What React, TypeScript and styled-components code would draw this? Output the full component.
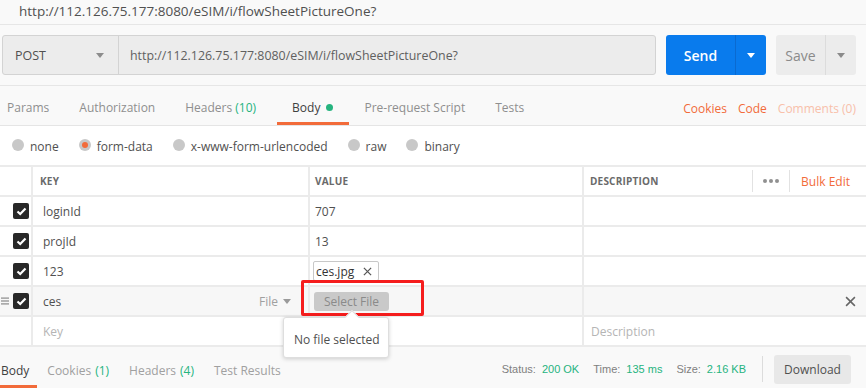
import styled, { createGlobalStyle } from 'styled-components'

const GlobalStyle = createGlobalStyle`
  html, body {
    margin: 0;
    padding: 0;
  }
  body {
    font-family: 'Open Sans', 'Liberation Sans', sans-serif;
    background: #f9f9f9;
    color: #505050;
  }
`

const ORANGE = '#f26b3a'
const GREEN = '#26b47f'

const Page = styled.div`
  width: 866px;
  height: 388px;
  overflow: hidden;
  display: flex;
  flex-direction: column;
  background: #f9f9f9;
`

const TitleBar = styled.div`
  height: 24px;
  line-height: 22px;
  padding-left: 19px;
  font-size: 13.5px;
  color: #505050;
  border-bottom: 1px solid #e6e6e6;
`

const RequestBar = styled.div`
  display: flex;
  gap: 10px;
  padding: 10px 10px 10px 2px;
  border-bottom: 1px solid #e6e6e6;
`

const UrlGroup = styled.div`
  flex: 1;
  height: 40px;
  box-sizing: border-box;
  display: flex;
  border: 1px solid #d3d3d3;
  border-radius: 3px;
  background: #ececec;
  font-size: 12.4px;
`

const MethodSelect = styled.div`
  width: 116px;
  box-sizing: border-box;
  display: flex;
  align-items: center;
  justify-content: space-between;
  padding: 0 14px 0 12px;
  border-right: 1px solid #d3d3d3;
  color: #505050;
  font-size: 12.5px;
`

const UrlText = styled.div`
  display: flex;
  align-items: center;
  padding-left: 11px;
  color: #606060;
`

const SplitButton = styled.div<{ $primary?: boolean; $main: number }>`
  display: flex;
  height: 40px;
  border-radius: 3px;
  overflow: hidden;
  background: ${(p) => (p.$primary ? '#097bed' : '#ececec')};
  color: ${(p) => (p.$primary ? '#ffffff' : '#8a8a8a')};
  font-size: 14px;
  font-weight: ${(p) => (p.$primary ? 600 : 400)};

  .main {
    width: ${(p) => p.$main}px;
    box-sizing: border-box;
    display: flex;
    align-items: center;
    justify-content: center;
    border-right: 1px solid ${(p) => (p.$primary ? '#0a6ad0' : '#dcdcdc')};
  }

  .caret {
    width: 30px;
    display: flex;
    align-items: center;
    justify-content: center;
  }
`

const TabBar = styled.div`
  height: 40px;
  box-sizing: border-box;
  display: flex;
  align-items: stretch;
  border-bottom: 1px solid #e5e5e5;
  padding-right: 10px;
`

const Tab = styled.div<{ $active?: boolean; $right?: number }>`
  display: flex;
  align-items: center;
  gap: 6px;
  padding: 7px ${(p) => p.$right ?? 15}px 0 15px;
  font-size: 12px;
  color: ${(p) => (p.$active ? '#404040' : '#8f8f8f')};
  border-bottom: 3px solid ${(p) => (p.$active ? ORANGE : 'transparent')};

  &:first-child {
    padding-left: 7px;
  }
`

const Count = styled.span`
  color: ${GREEN};
`

const Dot = styled.span`
  width: 7px;
  height: 7px;
  border-radius: 50%;
  background: ${GREEN};
`

const TabLinks = styled.div`
  margin-left: auto;
  display: flex;
  align-items: center;
  gap: 11px;
  padding-top: 5px;
  font-size: 12px;
`

const TabLink = styled.span<{ $faint?: boolean }>`
  color: ${(p) => (p.$faint ? '#f8c0aa' : ORANGE)};
`

const RadioRow = styled.div`
  height: 39px;
  display: flex;
  align-items: center;
  gap: 20px;
  padding: 2px 0 0 12px;
  box-sizing: border-box;
  background: #ffffff;
  font-size: 12px;
`

const RadioItem = styled.label`
  display: flex;
  align-items: center;
  gap: 6px;
  color: #505050;
`

const RadioCircle = styled.span<{ $checked?: boolean }>`
  width: 12px;
  height: 12px;
  border-radius: 50%;
  background: #c8c8c8;
  display: flex;
  align-items: center;
  justify-content: center;
  margin-top: -3px;

  &::after {
    content: '';
    width: 6px;
    height: 6px;
    border-radius: 50%;
    background: ${(p) => (p.$checked ? ORANGE : 'transparent')};
  }
`

const Table = styled.div`
  display: grid;
  grid-template-columns: 31px 275px 272px 1fr;
  grid-auto-rows: 28px;
  gap: 2px;
  padding: 2px 0;
  background: #ebebeb;
  font-size: 12px;
`

const Cell = styled.div<{ $muted?: boolean; $pad?: number }>`
  position: relative;
  display: flex;
  align-items: center;
  padding-left: ${(p) => p.$pad ?? 10}px;
  background: ${(p) => (p.$muted ? '#f7f7f7' : '#ffffff')};
  color: #505050;
`

const CheckCell = styled(Cell)`
  justify-content: flex-end;
  gap: 4px;
  padding: 0 2px 0 0;
`

const HeadCell = styled(Cell)`
  font-size: 10px;
  font-weight: 700;
  color: #6a6a6a;
  letter-spacing: 0.2px;
`

const Check = styled.span`
  width: 16px;
  height: 16px;
  border-radius: 2px;
  background: #282828;
  display: flex;
  align-items: center;
  justify-content: center;
`

const Placeholder = styled.span`
  color: #b5b5b5;
`

const HeadTools = styled.div`
  margin-left: auto;
  display: flex;
  align-items: center;
  height: 100%;
`

const ToolDivider = styled.span`
  width: 1px;
  height: 22px;
  background: #e2e2e2;
`

const Dots = styled.span`
  display: flex;
  gap: 2px;
  padding: 0 10px;

  i {
    width: 4px;
    height: 4px;
    border-radius: 50%;
    background: #909090;
  }
`

const BulkEdit = styled.span`
  padding: 0 16px 0 11px;
  font-size: 12px;
  font-weight: 400;
  letter-spacing: 0;
  color: ${ORANGE};
`

const TypeSelect = styled.span`
  margin-left: auto;
  margin-right: 17px;
  display: flex;
  align-items: center;
  gap: 5px;
  color: #a0a0a0;
`

const FileChip = styled.span`
  display: flex;
  align-items: center;
  gap: 9px;
  height: 20px;
  box-sizing: border-box;
  padding: 0 6px 0 2px;
  margin-left: -1px;
  border: 1px solid #c8c8c8;
  border-radius: 2px;
  background: #ffffff;
  color: #333333;
`

const SelectFile = styled.span`
  height: 19px;
  width: 75px;
  display: flex;
  align-items: center;
  justify-content: center;
  margin-left: -1px;
  border-radius: 3px;
  background: #c9c9c9;
  color: #8a8a8a;
`

const Highlight = styled.div`
  position: absolute;
  left: -9px;
  top: -7px;
  width: 123px;
  height: 36px;
  box-sizing: border-box;
  border: 3px solid #f51d1d;
  border-radius: 2px;
  pointer-events: none;
`

const Tooltip = styled.div`
  position: absolute;
  left: -27px;
  top: 30px;
  width: 106px;
  height: 41px;
  box-sizing: border-box;
  display: flex;
  align-items: center;
  padding: 4px 0 0 10px;
  background: #ffffff;
  border: 1px solid #dedede;
  border-radius: 3px;
  box-shadow: 0 1px 4px rgba(0, 0, 0, 0.18);
  color: #505050;
  z-index: 2;

  &::before {
    content: '';
    position: absolute;
    left: 63px;
    top: -6px;
    width: 9px;
    height: 9px;
    background: #ffffff;
    border-left: 1px solid #dedede;
    border-top: 1px solid #dedede;
    transform: rotate(45deg);
  }
`

const RemoveCell = styled(Cell)`
  justify-content: flex-end;
  padding-right: 10px;
`

const ResponseBar = styled.div`
  flex: 1;
  display: flex;
  align-items: stretch;
  padding-right: 15px;
`

const ResTab = styled.div<{ $active?: boolean }>`
  display: flex;
  align-items: center;
  gap: 4px;
  padding: 9px 10px 0;
  font-size: 12px;
  color: ${(p) => (p.$active ? '#404040' : '#a0a0a0')};
  border-bottom: 3px solid ${(p) => (p.$active ? ORANGE : 'transparent')};

  &:first-child {
    padding: 9px 8px 0 1px;
  }
`

const Meta = styled.div`
  margin-left: auto;
  display: flex;
  align-items: center;
  padding-top: 3px;
  font-family: 'Liberation Sans', Arial, sans-serif;
  font-size: 11px;
  color: #808080;
`

const MetaItem = styled.span`
  margin-right: 14px;

  b {
    font-weight: 400;
    color: ${GREEN};
    margin-left: 6px;
  }
`

const MetaDivider = styled.span`
  width: 1px;
  height: 26px;
  background: #dcdcdc;
  margin: 0 11px 0 2px;
`

const DownloadButton = styled.span`
  width: 77px;
  height: 29px;
  display: flex;
  align-items: center;
  justify-content: center;
  border-radius: 3px;
  background: #e8e8e8;
  color: #505050;
  font-family: 'Open Sans', sans-serif;
  font-size: 12px;
`

const Caret = ({ color = '#808080' }: { color?: string }) => (
  <svg width="8" height="5" viewBox="0 0 8 5">
    <polygon points="0,0 8,0 4,5" fill={color} />
  </svg>
)

const CheckMark = () => (
  <svg width="11" height="9" viewBox="0 0 11 9">
    <polyline points="1.5,4.5 4.2,7 9.5,1.5" fill="none" stroke="#fff" strokeWidth="2.2" />
  </svg>
)

const DragHandle = () => (
  <svg width="8" height="8" viewBox="0 0 8 8">
    <rect x="0" y="0.5" width="8" height="1.2" fill="#8a8a8a" />
    <rect x="0" y="3.4" width="8" height="1.2" fill="#8a8a8a" />
    <rect x="0" y="6.3" width="8" height="1.2" fill="#8a8a8a" />
  </svg>
)

const Cross = ({ size = 10, color = '#606060' }: { size?: number; color?: string }) => (
  <svg width={size} height={size} viewBox="0 0 10 10">
    <path d="M1 1 L9 9 M9 1 L1 9" stroke={color} strokeWidth="1.4" />
  </svg>
)

const rows = [
  { key: 'loginId', value: '707' },
  { key: 'projId', value: '13' },
]

const CheckedBox = () => (
  <Check>
    <CheckMark />
  </Check>
)

export default function App() {
  return (
    <>
      <GlobalStyle />
      <Page>
        <TitleBar>http://112.126.75.177:8080/eSIM/i/flowSheetPictureOne?</TitleBar>

        <RequestBar>
          <UrlGroup>
            <MethodSelect>
              POST
              <Caret color="#8c8c8c" />
            </MethodSelect>
            <UrlText>http://112.126.75.177:8080/eSIM/i/flowSheetPictureOne?</UrlText>
          </UrlGroup>
          <SplitButton $primary $main={70}>
            <span className="main">Send</span>
            <span className="caret">
              <Caret color="#ffffff" />
            </span>
          </SplitButton>
          <SplitButton $main={50}>
            <span className="main">Save</span>
            <span className="caret">
              <Caret color="#8a8a8a" />
            </span>
          </SplitButton>
        </RequestBar>

        <TabBar>
          <Tab>Params</Tab>
          <Tab>Authorization</Tab>
          <Tab $right={21}>
            <span>
              Headers <Count>(10)</Count>
            </span>
          </Tab>
          <Tab $active $right={16}>
            Body <Dot />
          </Tab>
          <Tab>Pre-request Script</Tab>
          <Tab>Tests</Tab>
          <TabLinks>
            <TabLink>Cookies</TabLink>
            <TabLink>Code</TabLink>
            <TabLink $faint>Comments (0)</TabLink>
          </TabLinks>
        </TabBar>

        <RadioRow>
          <RadioItem>
            <RadioCircle />
            none
          </RadioItem>
          <RadioItem>
            <RadioCircle $checked />
            form-data
          </RadioItem>
          <RadioItem>
            <RadioCircle />
            x-www-form-urlencoded
          </RadioItem>
          <RadioItem>
            <RadioCircle />
            raw
          </RadioItem>
          <RadioItem>
            <RadioCircle />
            binary
          </RadioItem>
        </RadioRow>

        <Table>
          <HeadCell />
          <HeadCell $pad={7}>KEY</HeadCell>
          <HeadCell $pad={5}>VALUE</HeadCell>
          <HeadCell $pad={6}>
            DESCRIPTION
            <HeadTools>
              <ToolDivider />
              <Dots>
                <i />
                <i />
                <i />
              </Dots>
              <ToolDivider />
              <BulkEdit>Bulk Edit</BulkEdit>
            </HeadTools>
          </HeadCell>

          {rows.flatMap((r) => [
            <CheckCell key={r.key + '-c'}>
              <CheckedBox />
            </CheckCell>,
            <Cell key={r.key + '-k'}>{r.key}</Cell>,
            <Cell key={r.key + '-v'} $pad={5}>
              {r.value}
            </Cell>,
            <Cell key={r.key + '-d'} />,
          ])}

          <CheckCell>
            <CheckedBox />
          </CheckCell>
          <Cell>123</Cell>
          <Cell $pad={4}>
            <FileChip>
              ces.jpg
              <Cross size={9} color="#555" />
            </FileChip>
          </Cell>
          <Cell />

          <CheckCell $muted>
            <DragHandle />
            <CheckedBox />
          </CheckCell>
          <Cell $muted>
            ces
            <TypeSelect>
              File
              <Caret color="#9a9a9a" />
            </TypeSelect>
          </Cell>
          <Cell $muted $pad={5}>
            <SelectFile>Select File</SelectFile>
            <Highlight />
            <Tooltip>No file selected</Tooltip>
          </Cell>
          <RemoveCell $muted>
            <Cross size={11} color="#666" />
          </RemoveCell>

          <Cell />
          <Cell>
            <Placeholder>Key</Placeholder>
          </Cell>
          <Cell $pad={5} />
          <Cell $pad={7}>
            <Placeholder>Description</Placeholder>
          </Cell>
        </Table>

        <ResponseBar>
          <ResTab $active>Body</ResTab>
          <ResTab>
            Cookies <Count>(1)</Count>
          </ResTab>
          <ResTab>
            Headers <Count>(4)</Count>
          </ResTab>
          <ResTab>Test Results</ResTab>
          <Meta>
            <MetaItem>
              Status:<b>200 OK</b>
            </MetaItem>
            <MetaItem>
              Time:<b>135 ms</b>
            </MetaItem>
            <MetaItem>
              Size:<b>2.16 KB</b>
            </MetaItem>
            <MetaDivider />
            <DownloadButton>Download</DownloadButton>
          </Meta>
        </ResponseBar>
      </Page>
    </>
  )
}
